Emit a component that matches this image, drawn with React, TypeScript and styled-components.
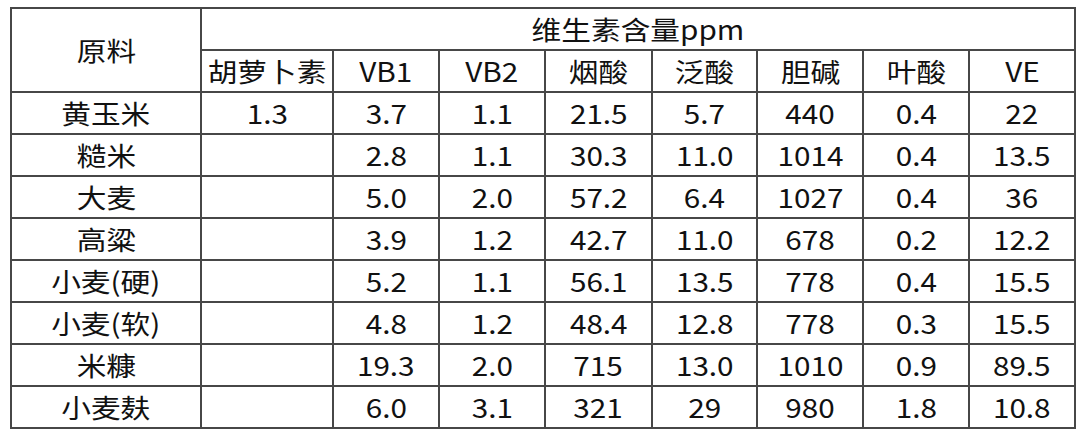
import React from "react";
import styled, { createGlobalStyle } from "styled-components";

const Global = createGlobalStyle`
  html, body { margin: 0; padding: 0; background: #ffffff; }
  body { font-family: "Noto Sans CJK SC", "Noto Sans", sans-serif; color: #111; }
`;

const Page = styled.div`
  padding: 7px 0 0 10px;
`;

const Table = styled.table`
  border-collapse: collapse;
  table-layout: fixed;
  width: 1064px;
`;

const Row = styled.tr`
  height: 42px;
`;

const Cell = styled.td`
  border: 2px solid #474747;
  padding: 0;
  text-align: center;
  vertical-align: middle;
  line-height: 1;
  white-space: nowrap;
  overflow: hidden;
`;

const Text = styled.span`
  display: inline-block;
  font-size: 26.5px;
  transform: scaleX(1.12);
  transform-origin: center;
`;

const cols = [190, 132, 106, 106, 107, 105, 106, 106, 106];
const heads = ["胡萝卜素", "VB1", "VB2", "烟酸", "泛酸", "胆碱", "叶酸", "VE"];
const rows: string[][] = [
  ["黄玉米", "1.3", "3.7", "1.1", "21.5", "5.7", "440", "0.4", "22"],
  ["糙米", "", "2.8", "1.1", "30.3", "11.0", "1014", "0.4", "13.5"],
  ["大麦", "", "5.0", "2.0", "57.2", "6.4", "1027", "0.4", "36"],
  ["高粱", "", "3.9", "1.2", "42.7", "11.0", "678", "0.2", "12.2"],
  ["小麦(硬)", "", "5.2", "1.1", "56.1", "13.5", "778", "0.4", "15.5"],
  ["小麦(软)", "", "4.8", "1.2", "48.4", "12.8", "778", "0.3", "15.5"],
  ["米糠", "", "19.3", "2.0", "715", "13.0", "1010", "0.9", "89.5"],
  ["小麦麸", "", "6.0", "3.1", "321", "29", "980", "1.8", "10.8"],
];

export default function App() {
  return (
    <Page>
      <Global />
      <Table>
        <colgroup>
          {cols.map((w, i) => (
            <col key={i} style={{ width: w }} />
          ))}
        </colgroup>
        <tbody>
          <Row>
            <Cell rowSpan={2}>
              <Text>原料</Text>
            </Cell>
            <Cell colSpan={8}>
              <Text>维生素含量ppm</Text>
            </Cell>
          </Row>
          <Row>
            {heads.map((h) => (
              <Cell key={h}>
                <Text>{h}</Text>
              </Cell>
            ))}
          </Row>
          {rows.map((r) => (
            <Row key={r[0]}>
              {r.map((c, i) => (
                <Cell key={i}>{c && <Text>{c}</Text>}</Cell>
              ))}
            </Row>
          ))}
        </tbody>
      </Table>
    </Page>
  );
}
